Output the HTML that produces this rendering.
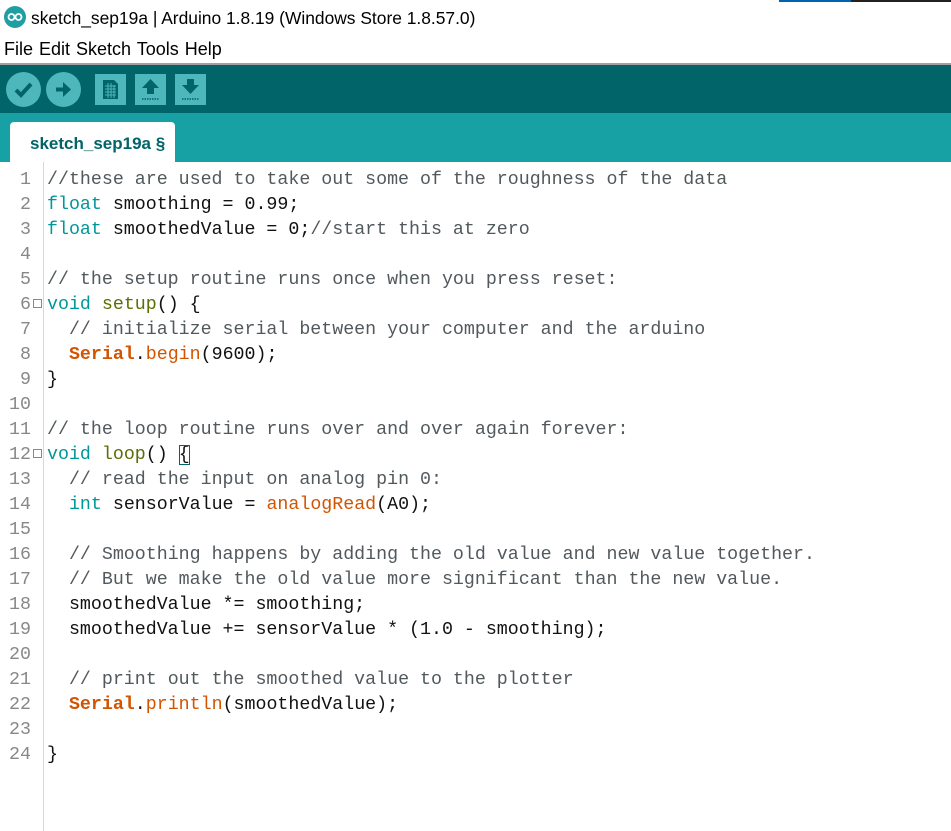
<!DOCTYPE html>
<html><head><meta charset="utf-8"><style>
*{margin:0;padding:0;box-sizing:border-box}
body{width:951px;height:831px;overflow:hidden;background:#fff;font-family:"Liberation Sans",sans-serif;position:relative}
.title{position:absolute;left:0;top:0;width:951px;height:36px}
.title .t{position:absolute;left:31px;top:8px;font-size:17.4px;color:#000}
.logo{position:absolute;left:4px;top:6px;width:22px;height:22px;border-radius:50%;background:#1f9ea3}
.bar1{position:absolute;left:779px;top:0;width:72px;height:2px;background:#0063b1}
.bar2{position:absolute;left:851px;top:0;width:100px;height:2px;background:#222}
.menu{position:absolute;left:4px;top:39px;font-size:18px;color:#000;word-spacing:1px}
.sep{position:absolute;left:0;top:63px;width:951px;height:2px;background:#a0a0a0}
.tool{position:absolute;left:0;top:65px;width:951px;height:48px;background:#006468}
.rb{position:absolute;top:7px;width:35px;height:35px;border-radius:50%;background:#4db7bb}
.sb{position:absolute;top:9px;width:31px;height:31px;background:#4db7bb}
.tabs{position:absolute;left:0;top:113px;width:951px;height:49px;background:#17a1a5}
.tab{position:absolute;left:10px;top:9px;width:165px;height:40px;background:#fff;border-radius:4px 4px 0 0}
.tab span{position:absolute;left:20px;top:12px;font-size:17px;font-weight:bold;color:#006468}
.gut{position:absolute;left:43px;top:162px;width:1px;height:669px;background:#d8d8d8}
.code{position:absolute;left:0;top:168px;font-family:"Liberation Mono",monospace;font-size:18.3px;line-height:25px;white-space:pre}
.ln{position:absolute;left:0;width:31px;text-align:right;color:#888}
.c{position:absolute;left:47px;color:#111}
.fold{position:absolute;left:33px;width:9px;height:9px;border:1px solid #888}
.cm{color:#52595d}.kw{color:#00979c}.fn{color:#5e6d03}.se{color:#d35400;font-weight:bold}.me{color:#d35400}
.br{outline:1px solid #006468;outline-offset:-1px}
</style></head><body>
<div class="title"><div class="logo"><svg width="22" height="22" viewBox="0 0 22 22"><circle cx="7.5" cy="11" r="3" fill="none" stroke="#fff" stroke-width="1.8"/><circle cx="14.5" cy="11" r="3" fill="none" stroke="#fff" stroke-width="1.8"/></svg></div><div class="t">sketch_sep19a | Arduino 1.8.19 (Windows Store 1.8.57.0)</div></div>
<div class="bar1"></div><div class="bar2"></div>
<div class="menu">File Edit Sketch Tools Help</div>
<div class="sep"></div>
<div class="tool">
<div class="rb" style="left:6px"><svg width="35" height="35"><path d="M10 18 L15 23 L25 12" fill="none" stroke="#006468" stroke-width="4"/></svg></div>
<div class="rb" style="left:46px"><svg width="35" height="35"><path d="M10 17.5 H20" stroke="#006468" stroke-width="4"/><path d="M17 10 L25 17.5 L17 25 Z" fill="#006468"/></svg></div>
<div class="sb" style="left:95px"><svg width="31" height="31"><path d="M8 6 H19 L23 10 V25 H8 Z" fill="#006468"/><path d="M10 12 H21 M10 15 H21 M10 18 H21 M10 21 H21 M13 9 V24 M16 9 V24 M19 11 V24" stroke="#4db7bb" stroke-width="1"/></svg></div>
<div class="sb" style="left:135px"><svg width="31" height="31"><path d="M15.5 5 L24 14 H19 V20 H12 V14 H7 Z" fill="#006468"/><path d="M7 25 H24" stroke="#006468" stroke-width="1.5" stroke-dasharray="1.5 1"/></svg></div>
<div class="sb" style="left:175px"><svg width="31" height="31"><path d="M15.5 20 L24 11 H19 V5 H12 V11 H7 Z" fill="#006468"/><path d="M7 25 H24" stroke="#006468" stroke-width="1.5" stroke-dasharray="1.5 1"/></svg></div>
</div>
<div class="tabs"><div class="tab"><span>sketch_sep19a §</span></div></div>
<div class="gut"></div>
<div class="code">
<div class="ln" style="top:0">1</div><div class="c" style="top:0"><span class="cm">//these are used to take out some of the roughness of the data</span></div>
<div class="ln" style="top:25px">2</div><div class="c" style="top:25px"><span class="kw">float</span> smoothing = 0.99;</div>
<div class="ln" style="top:50px">3</div><div class="c" style="top:50px"><span class="kw">float</span> smoothedValue = 0;<span class="cm">//start this at zero</span></div>
<div class="ln" style="top:75px">4</div>
<div class="ln" style="top:100px">5</div><div class="c" style="top:100px"><span class="cm">// the setup routine runs once when you press reset:</span></div>
<div class="ln" style="top:125px">6</div><div class="fold" style="top:131px"></div><div class="c" style="top:125px"><span class="kw">void</span> <span class="fn">setup</span>() {</div>
<div class="ln" style="top:150px">7</div><div class="c" style="top:150px">  <span class="cm">// initialize serial between your computer and the arduino</span></div>
<div class="ln" style="top:175px">8</div><div class="c" style="top:175px">  <span class="se">Serial</span>.<span class="me">begin</span>(9600);</div>
<div class="ln" style="top:200px">9</div><div class="c" style="top:200px">}</div>
<div class="ln" style="top:225px">10</div>
<div class="ln" style="top:250px">11</div><div class="c" style="top:250px"><span class="cm">// the loop routine runs over and over again forever:</span></div>
<div class="ln" style="top:275px">12</div><div class="fold" style="top:281px"></div><div class="c" style="top:275px"><span class="kw">void</span> <span class="fn">loop</span>() <span class="br">{</span></div>
<div class="ln" style="top:300px">13</div><div class="c" style="top:300px">  <span class="cm">// read the input on analog pin 0:</span></div>
<div class="ln" style="top:325px">14</div><div class="c" style="top:325px">  <span class="kw">int</span> sensorValue = <span class="me">analogRead</span>(A0);</div>
<div class="ln" style="top:350px">15</div>
<div class="ln" style="top:375px">16</div><div class="c" style="top:375px">  <span class="cm">// Smoothing happens by adding the old value and new value together.</span></div>
<div class="ln" style="top:400px">17</div><div class="c" style="top:400px">  <span class="cm">// But we make the old value more significant than the new value.</span></div>
<div class="ln" style="top:425px">18</div><div class="c" style="top:425px">  smoothedValue *= smoothing;</div>
<div class="ln" style="top:450px">19</div><div class="c" style="top:450px">  smoothedValue += sensorValue * (1.0 - smoothing);</div>
<div class="ln" style="top:475px">20</div>
<div class="ln" style="top:500px">21</div><div class="c" style="top:500px">  <span class="cm">// print out the smoothed value to the plotter</span></div>
<div class="ln" style="top:525px">22</div><div class="c" style="top:525px">  <span class="se">Serial</span>.<span class="me">println</span>(smoothedValue);</div>
<div class="ln" style="top:550px">23</div>
<div class="ln" style="top:575px">24</div><div class="c" style="top:575px">}</div>
</div>
</body></html>
